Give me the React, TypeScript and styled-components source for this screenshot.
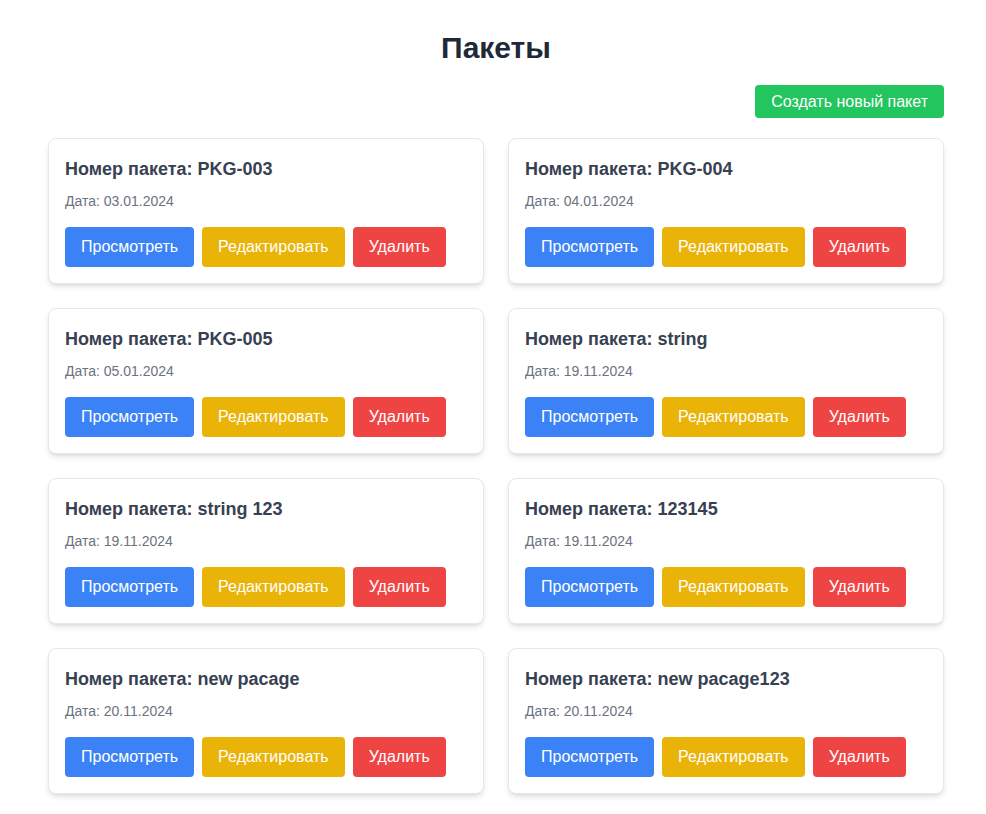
import React from "react";
import styled, { createGlobalStyle } from "styled-components";

const Global = createGlobalStyle`
  html, body { margin: 0; padding: 0; background: #ffffff; }
  body { font-family: "Liberation Sans", Arial, sans-serif; }
  * { box-sizing: border-box; }
`;

const Page = styled.main`
  width: 896px;
  margin-left: 48px;
  padding-bottom: 20px;
`;

const Title = styled.h1`
  margin: 28px 0 17px;
  font-size: 30px;
  line-height: 40px;
  font-weight: 700;
  text-align: center;
  color: #1f2937;
`;

const Toolbar = styled.div`
  display: flex;
  justify-content: flex-end;
  margin-bottom: 20px;
`;

const CreateButton = styled.button`
  border: none;
  border-radius: 4px;
  background: #22c55e;
  color: #ffffff;
  font-family: inherit;
  font-size: 16px;
  line-height: 19px;
  padding: 7px 16px;
  cursor: pointer;
`;

const Grid = styled.div`
  display: grid;
  grid-template-columns: 1fr 1fr;
  gap: 24px;
`;

const Card = styled.div`
  border: 1px solid #e5e7eb;
  border-radius: 8px;
  background: #ffffff;
  padding: 16px;
  box-shadow: 0 4px 6px -1px rgba(0, 0, 0, 0.1), 0 2px 4px -2px rgba(0, 0, 0, 0.1);
`;

const CardTitle = styled.h2`
  margin: 0 0 8px;
  font-size: 18px;
  line-height: 28px;
  font-weight: 700;
  color: #374151;
`;

const DateText = styled.p`
  margin: 0 0 16px;
  font-size: 14px;
  line-height: 20px;
  color: #6b7280;
`;

const Actions = styled.div`
  display: flex;
  gap: 8px;
`;

const ActionButton = styled.button<{ $bg: string }>`
  border: none;
  border-radius: 4px;
  background: ${(p) => p.$bg};
  color: #ffffff;
  font-family: inherit;
  font-size: 16px;
  line-height: 24px;
  padding: 8px 16px;
  cursor: pointer;
`;

const packages = [
  { id: "PKG-003", date: "03.01.2024" },
  { id: "PKG-004", date: "04.01.2024" },
  { id: "PKG-005", date: "05.01.2024" },
  { id: "string", date: "19.11.2024" },
  { id: "string 123", date: "19.11.2024" },
  { id: "123145", date: "19.11.2024" },
  { id: "new pacage", date: "20.11.2024" },
  { id: "new pacage123", date: "20.11.2024" },
];

export default function App() {
  return (
    <>
      <Global />
      <Page>
        <Title>Пакеты</Title>
        <Toolbar>
          <CreateButton>Создать новый пакет</CreateButton>
        </Toolbar>
        <Grid>
          {packages.map((p) => (
            <Card key={p.id}>
              <CardTitle>Номер пакета: {p.id}</CardTitle>
              <DateText>Дата: {p.date}</DateText>
              <Actions>
                <ActionButton $bg="#3b82f6">Просмотреть</ActionButton>
                <ActionButton $bg="#eab308">Редактировать</ActionButton>
                <ActionButton $bg="#ef4444">Удалить</ActionButton>
              </Actions>
            </Card>
          ))}
        </Grid>
      </Page>
    </>
  );
}
